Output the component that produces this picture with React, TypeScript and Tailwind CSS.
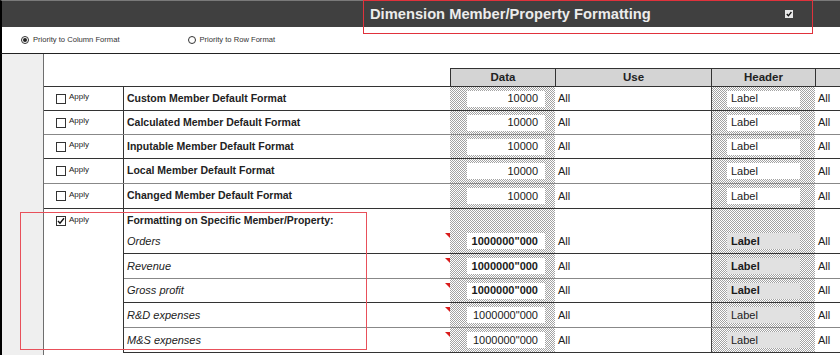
import * as React from 'react'

const DOTS =
  'bg-[image:repeating-conic-gradient(#a2a2a2_0_25%,#ffffff_0_50%)] bg-[length:2px_2px]'

type Row = { name: string; data: string; label: string }

const DEFAULT_ROWS: Row[] = [
  { name: 'Custom Member Default Format', data: '10000', label: 'Label' },
  { name: 'Calculated Member Default Format', data: '10000', label: 'Label' },
  { name: 'Inputable Member Default Format', data: '10000', label: 'Label' },
  { name: 'Local Member Default Format', data: '10000', label: 'Label' },
  { name: 'Changed Member Default Format', data: '10000', label: 'Label' },
]

const SPECIFIC = [
  { name: 'Orders', bold: true },
  { name: 'Revenue', bold: true },
  { name: 'Gross profit', bold: true },
  { name: 'R&D expenses', bold: false },
  { name: 'M&S expenses', bold: false },
]

function CheckBox({ checked }: { checked?: boolean }) {
  return (
    <span className="inline-flex h-[10px] w-[10px] items-center justify-center border border-[#333] bg-white">
      {checked ? (
        <svg width="8" height="8" viewBox="0 0 8 8">
          <path d="M1 4 L3 6.2 L7 1.2" fill="none" stroke="#111" strokeWidth="1.4" />
        </svg>
      ) : null}
    </span>
  )
}

function Radio({ on }: { on?: boolean }) {
  return (
    <span className="inline-flex h-[8px] w-[8px] items-center justify-center rounded-full border border-[#333] bg-white">
      {on ? <span className="h-[4px] w-[4px] rounded-full bg-[#222]" /> : null}
    </span>
  )
}

function ValueCells({
  data,
  label,
  bold,
  grayLabel,
  all = true,
}: {
  data?: string
  label?: string
  bold?: boolean
  grayLabel?: boolean
  all?: boolean
}) {
  return (
    <>
      <div className={`flex h-full w-[105px] items-center pl-[17px] pr-[10px] ${DOTS}`}>
        {data ? (
          <div
            className={`flex h-[16px] w-full items-center justify-end bg-white pr-[7px] text-[11px] text-[#1a1a1a] ${
              bold ? 'font-bold' : ''
            }`}
          >
            {data}
          </div>
        ) : null}
      </div>
      <div className="flex h-full w-[156px] items-center pl-[3px] text-[11px]">{all ? 'All' : ''}</div>
      <div className={`flex h-full w-[104px] items-center border-l border-[#444] pl-[15px] pr-[15px] ${DOTS}`}>
        {label ? (
          <div
            className={`flex h-[16px] w-full items-center pl-[4px] text-[11px] text-[#1a1a1a] ${
              grayLabel ? 'bg-[#e1e1e1]' : 'bg-white'
            } ${bold ? 'font-bold' : ''}`}
          >
            {label}
          </div>
        ) : null}
      </div>
      <div className="flex h-full flex-1 items-center pl-[3px] text-[11px]">{all ? 'All' : ''}</div>
    </>
  )
}

function Marker() {
  return (
    <span className="absolute right-0 top-[4px] h-0 w-0 border-l-[5px] border-t-[5px] border-l-transparent border-t-[#d91c1c]" />
  )
}

export default function App() {
  return (
    <div className="relative h-[355px] w-[840px] overflow-hidden bg-white font-['Liberation_Sans',Arial,sans-serif] text-[#222]">
      {/* title bar */}
      <div className="flex h-[27px] items-center border-l-2 border-t border-black border-t-[#7a7a7a] bg-[#404040] pl-[368px]">
        <span className="text-[14.7px] font-bold text-[#ececec]">
          Dimension Member/Property Formatting
        </span>
        <span className="ml-auto mr-[47px] flex h-[8px] w-[8px] items-center justify-center bg-[#e8e8e8]">
          <svg width="6" height="6" viewBox="0 0 6 6">
            <path d="M0.8 3 L2.4 4.8 L5.4 1" fill="none" stroke="#111" strokeWidth="1.3" />
          </svg>
        </span>
      </div>

      {/* priority radios */}
      <div className="flex h-[27px] items-center border-b border-l-2 border-black border-b-[#222] pl-[19px] text-[7.6px] text-[#333]">
        <label className="flex items-center gap-[4px]">
          <Radio on />
          Priority to Column Format
        </label>
        <label className="ml-[68px] flex items-center gap-[4px]">
          <Radio />
          Priority to Row Format
        </label>
      </div>

      <div className="flex h-[301px]">
        <div className="w-[44px] shrink-0 border-l-2 border-r border-black border-r-[#6e6e6e] bg-[#efefef]" />

        <div className="flex flex-1 flex-col">
          {/* column headers */}
          <div className="flex h-[33px] items-end border-b border-[#333]">
            <div className="w-[406px]" />
            <div className="flex h-[18px] w-[105px] items-center justify-center border-l border-t border-[#333] bg-[#d4d4d4] text-[11.5px] font-bold">
              Data
            </div>
            <div className="flex h-[18px] w-[156px] items-center justify-center border-l border-t border-[#333] bg-[#d4d4d4] text-[11.5px] font-bold">
              Use
            </div>
            <div className="flex h-[18px] w-[104px] items-center justify-center border-l border-t border-[#333] bg-[#d4d4d4] text-[11.5px] font-bold">
              Header
            </div>
            <div className="h-[18px] flex-1 border-l border-t border-[#333] bg-[#d4d4d4]" />
          </div>

          {/* default rows */}
          {DEFAULT_ROWS.map((r, i) => (
            <div
              key={r.name}
              className={`flex border-b ${i % 2 ? 'border-[#888]' : 'border-[#333]'} ${
                i >= 3 ? 'h-[25px]' : 'h-[24px]'
              }`}
            >
              <div className="flex h-full w-[80px] items-center gap-[3px] border-r border-[#333] pl-[12px] text-[8px]">
                <CheckBox />
                <span className="-mt-[3px]">Apply</span>
              </div>
              <div className="flex h-full w-[326px] items-center pl-[3px] text-[10.5px] font-bold">{r.name}</div>
              <ValueCells data={r.data} label={r.label} />
            </div>
          ))}

          {/* specific members */}
          <div className="flex">
            <div className="w-[80px] border-r border-[#333] pl-[12px] pt-[7px] text-[8px]">
              <div className="flex items-center gap-[3px]">
                <CheckBox checked />
                <span className="-mt-[3px]">Apply</span>
              </div>
            </div>
            <div className="flex flex-1 flex-col">
              <div className="flex h-[20px]">
                <div className="flex h-full w-[326px] items-end pl-[3px] text-[10.5px] font-bold">
                  Formatting on Specific Member/Property:
                </div>
                <ValueCells all={false} />
              </div>
              {SPECIFIC.map((s, i) => (
                <div
                  key={s.name}
                  className={`flex border-b ${i % 2 ? 'border-[#888]' : 'border-[#333]'} ${
                    i === 2 ? 'h-[24px]' : 'h-[25px]'
                  }`}
                >
                  <div className="relative flex h-full w-[326px] items-center pl-[3px] text-[11px] italic">
                    {s.name}
                    <Marker />
                  </div>
                  <ValueCells data={'1000000"000'} label="Label" bold={s.bold} grayLabel />
                </div>
              ))}
            </div>
          </div>
        </div>
      </div>

      {/* highlight boxes */}
      <div className="pointer-events-none absolute left-[363px] top-0 h-[34px] w-[450px] border border-[#e0323c]" />
      <div className="pointer-events-none absolute left-[20px] top-[212px] h-[138px] w-[347px] border border-[#e8505a]" />
    </div>
  )
}
